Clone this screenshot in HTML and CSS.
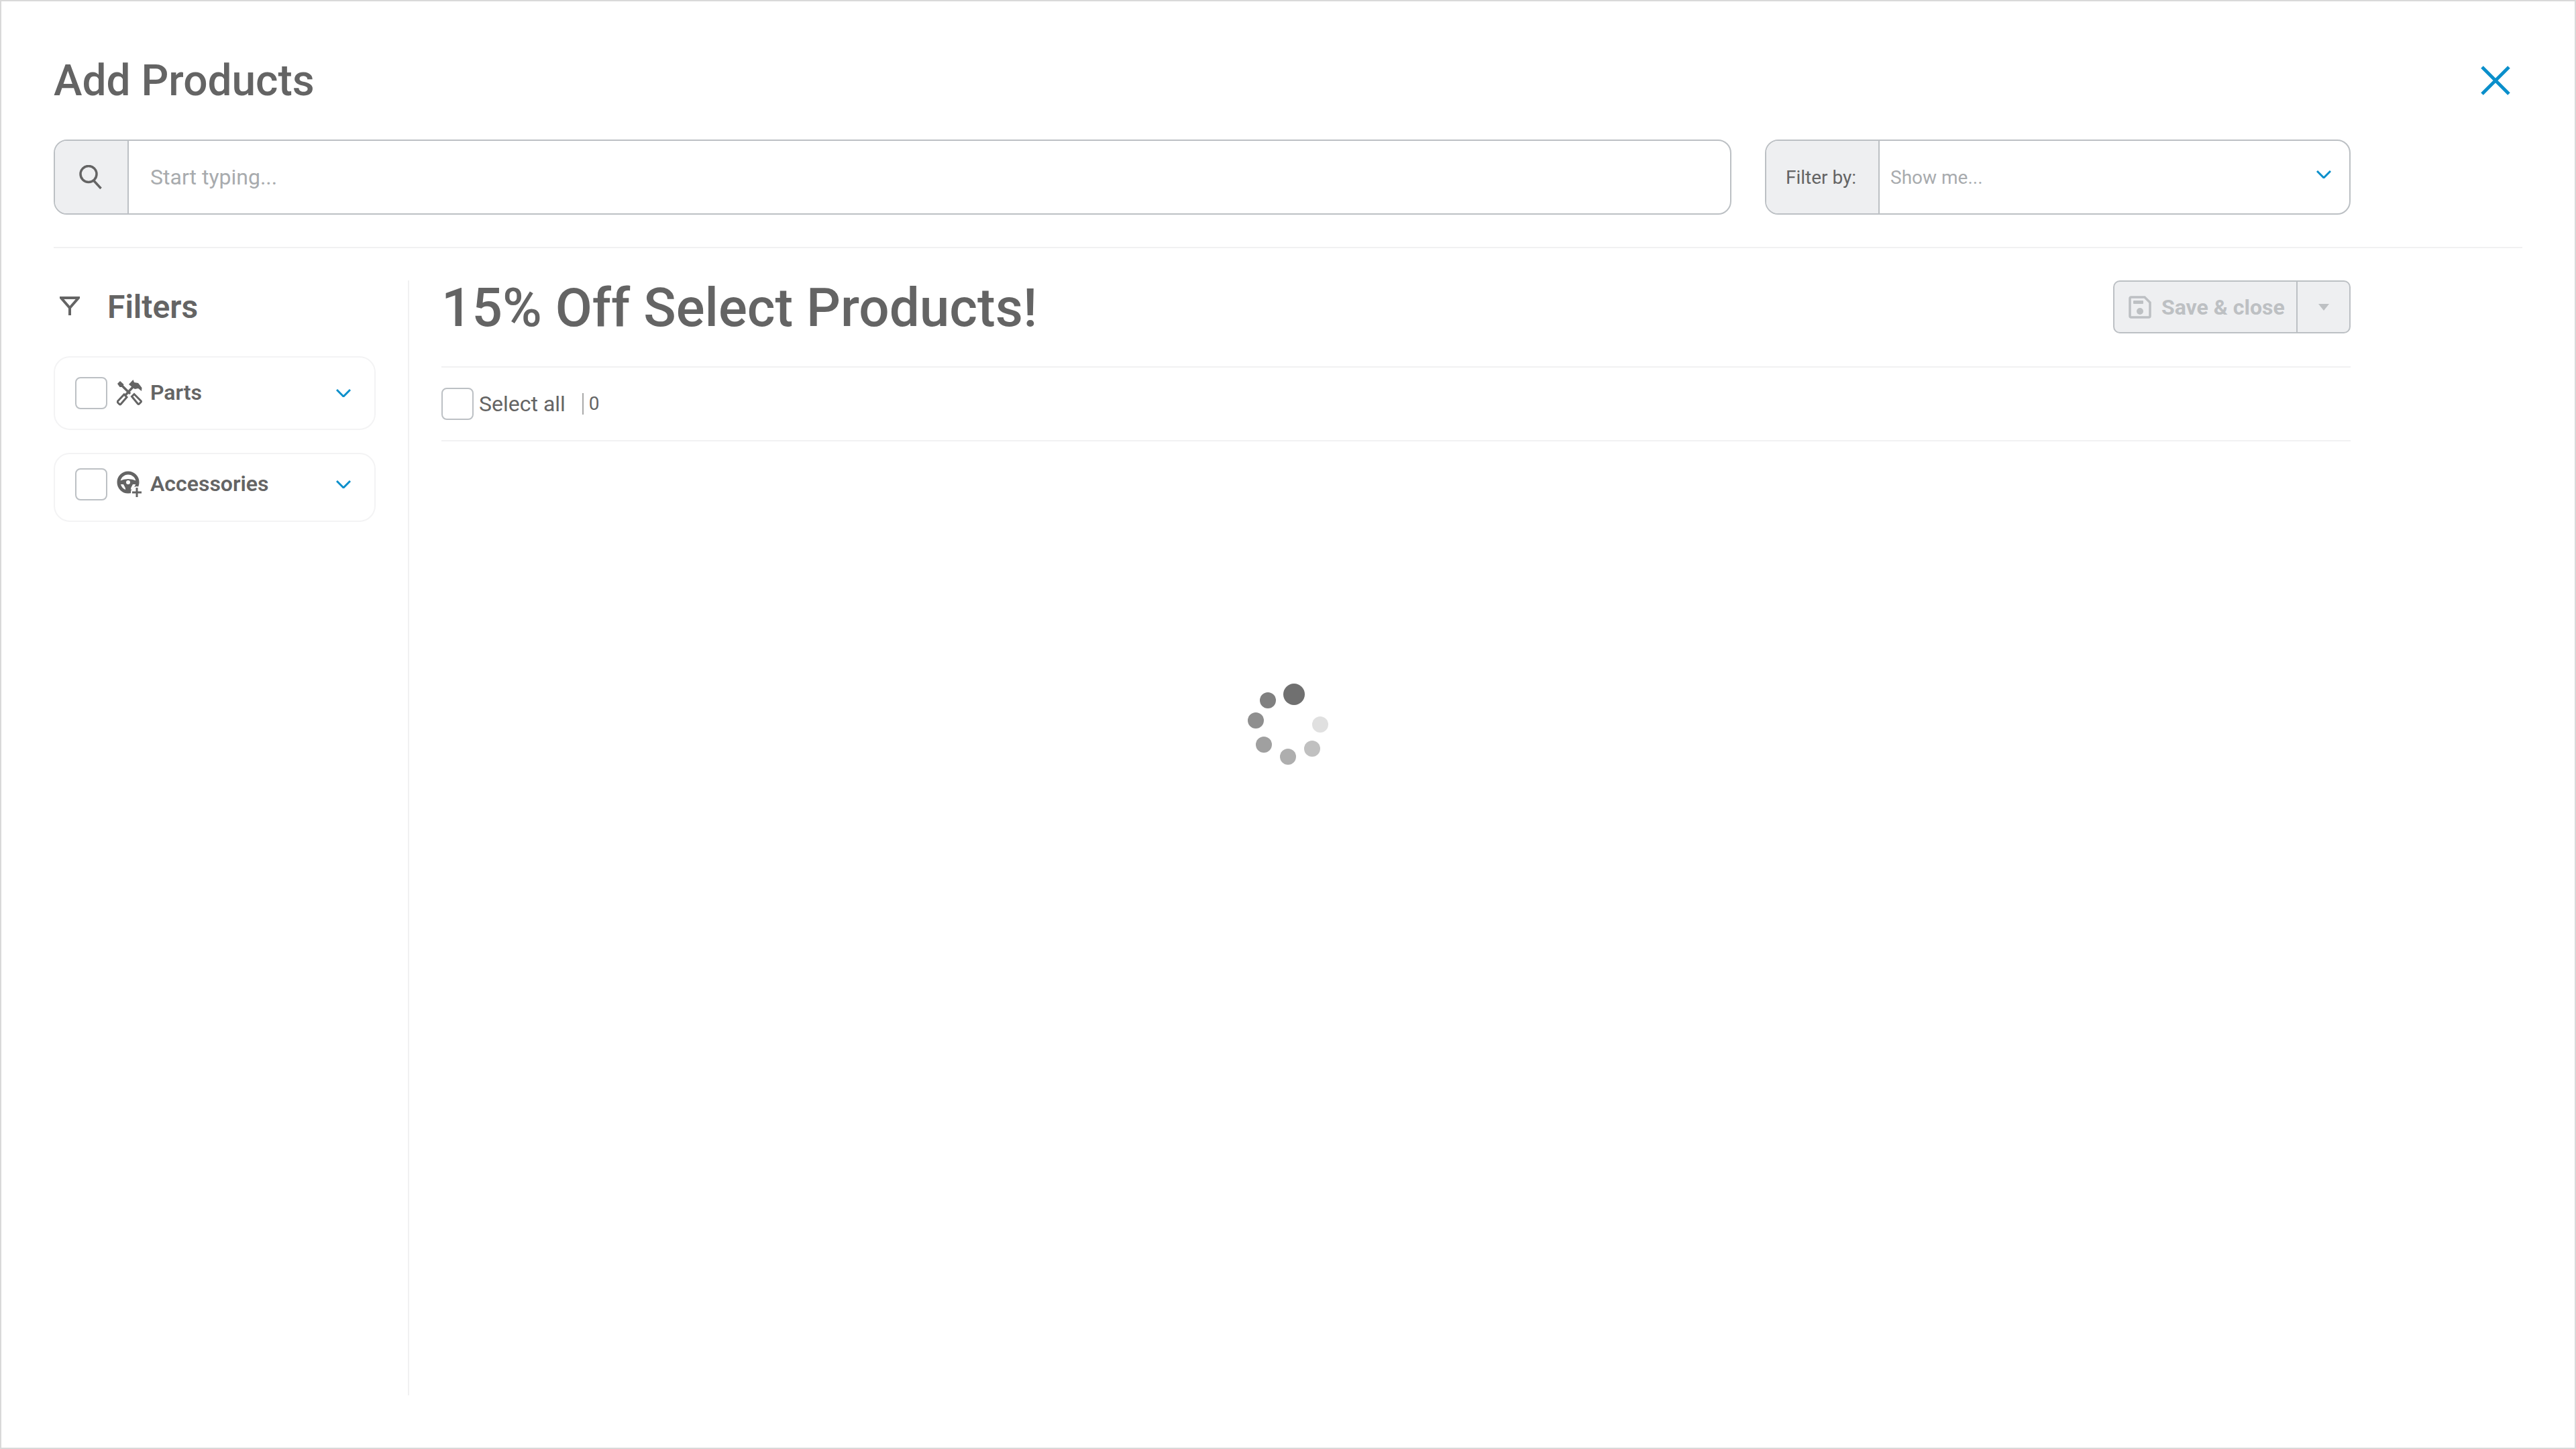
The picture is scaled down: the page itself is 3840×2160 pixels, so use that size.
FILE: index.html
```html
<!DOCTYPE html>
<html lang="en">
<head>
  <meta charset="UTF-8" />
  <title>Add Products</title>
  <link rel="stylesheet" href="styles.css">
</head>
<body>
  <div class="modal">
    <div class="title-row">
      <h1>Add Products</h1>
      <svg class="close" viewBox="0 0 44 44" aria-label="Close"><path d="M2 2 L42 42 M42 2 L2 42" /></svg>
    </div>

    <div class="search-row">
      <div class="field search">
        <div class="addon search-addon">
          <svg class="search-icon" viewBox="0 0 34 36"><circle cx="14" cy="13.5" r="12" /><path d="M21.5 23 L32.5 35" /></svg>
        </div>
        <div class="placeholder">Start typing...</div>
      </div>
      <div class="field filter-by">
        <div class="addon filter-addon">Filter by:</div>
        <div class="placeholder small">Show me...</div>
        <svg class="chevron" viewBox="0 0 22 12"><path d="M1 1 L11 11 L21 1" /></svg>
      </div>
    </div>

    <div class="content">
      <aside class="sidebar">
        <div class="filters-head">
          <svg class="funnel" viewBox="0 0 30 30"><path d="M2 2 H28 L15 17 Z M15 17 V28" /></svg>
          <span>Filters</span>
        </div>

        <div class="card parts">
          <span class="checkbox"></span>
          <svg class="cat-icon" viewBox="0 0 38 40">
            <path class="solid" d="M1 6 L5 2 L10.500 7 L8.500 11 L4.500 11 Z" />
            <path class="line" d="M7 8 L20 21" />
            <path class="outline" d="M22.500 25 L26 21.500 L36 31.500 Q37 32.500 36 33.500 L33.500 36 Q32.500 37 31.500 36 Z" />
            <path class="solid" d="M18 7 L24.500 0 L26 4 L32 5 L37.500 12 L37 17 L32 13 L27 14 L24 12 Z" />
            <path class="line" d="M24 11 L13 23" />
            <path class="outline" d="M11 22 L15 26 L6 36.500 Q5 37.500 4 36.500 L1.500 34 Q0.500 33 1.500 32 Z" />
          </svg>
          <span class="card-label">Parts</span>
          <svg class="chevron" viewBox="0 0 22 12"><path d="M1 1 L11 11 L21 1" /></svg>
        </div>

        <div class="card accessories">
          <span class="checkbox"></span>
          <svg class="cat-icon" viewBox="0 0 38 40">
            <circle class="ring" cx="17" cy="17" r="14" />
            <path class="solid" d="M4 15 Q17 9 30 15 L30 20 L24 20 Q21 24 20.500 30 L13.500 30 Q13 24 10 20 L4 20 Z" />
            <circle class="hub" cx="17" cy="17" r="3" />
            <circle class="halo" cx="30" cy="32" r="9" />
            <path class="plus" d="M30 25 V39 M23 32 H37" />
          </svg>
          <span class="card-label">Accessories</span>
          <svg class="chevron" viewBox="0 0 22 12"><path d="M1 1 L11 11 L21 1" /></svg>
        </div>
      </aside>

      <main class="main">
        <div class="main-head">
          <h2>15% Off Select Products!</h2>
          <div class="save-group">
            <div class="save-btn">
              <svg class="save-icon" viewBox="0 0 34 34">
                <path class="save-body" d="M2 4 Q2 2 4 2 H24 L32 10 V30 Q32 32 30 32 H4 Q2 32 2 30 Z" />
                <rect x="7" y="7" width="15" height="5" rx="1" />
                <circle cx="17" cy="23" r="5" />
              </svg>
              <span>Save &amp; close</span>
            </div>
            <div class="save-caret"><span class="caret"></span></div>
          </div>
        </div>
        <div class="select-row">
          <span class="checkbox"></span>
          <span class="select-label">Select all</span>
          <span class="count">0</span>
        </div>
      </main>
    </div>

    <svg class="spinner" viewBox="0 0 128 128">
      <circle cx="73" cy="20" r="16" fill="#707070" />
      <circle cx="34" cy="29" r="12" fill="#808080" />
      <circle cx="16" cy="59" r="12" fill="#8f8f8f" />
      <circle cx="28" cy="95" r="12" fill="#a0a0a0" />
      <circle cx="64" cy="113" r="12" fill="#aeaeae" />
      <circle cx="100" cy="101" r="12" fill="#c0c0c0" />
      <circle cx="112" cy="65" r="12" fill="#e0e0e0" />
    </svg>
  </div>
</body>
</html>
```

FILE: styles.css
```css
* {
  box-sizing: border-box;
}

body {
  margin: 0;
  font-family: 'Roboto', sans-serif;
  color: #646464;
  background: #fff;
}

.modal {
  position: relative;
  width: 3840px;
  height: 2160px;
  border: 2px solid #d9d9d9;
  padding: 78px 78px 0;
}

.title-row {
  display: flex;
  justify-content: space-between;
  align-items: center;
  height: 80px;
  margin-bottom: 48px;
}

h1 {
  margin: 0;
  font-size: 64px;
  font-weight: 500;
}

.close {
  width: 44px;
  height: 44px;
  margin-right: 18px;
}

.close path {
  fill: none;
  stroke: #0a8fcb;
  stroke-width: 5;
}

.search-row {
  display: flex;
  gap: 50px;
  padding: 0 256px 48px 0;
  border-bottom: 2px solid #f1f1f2;
}

.field {
  display: flex;
  align-items: center;
  height: 112px;
  border: 2px solid #bcc0c4;
  border-radius: 20px;
  overflow: hidden;
}

.search {
  flex: 1;
}

.filter-by {
  width: 873px;
  position: relative;
}

.addon {
  display: flex;
  align-items: center;
  justify-content: center;
  height: 100%;
  background: #eeeff1;
  border-right: 2px solid #bcc0c4;
}

.search-addon {
  width: 110px;
}

.filter-addon {
  justify-content: flex-start;
  width: 169px;
  padding-left: 29px;
  font-size: 28px;
}

.search-icon {
  width: 34px;
  height: 36px;
  margin-right: 3px;
}

.search-icon circle,
.search-icon path {
  fill: none;
  stroke: #646464;
  stroke-width: 3.5;
}

.placeholder {
  margin-left: 32px;
  font-size: 32px;
  color: #a8abae;
}

.placeholder.small {
  margin-left: 16px;
  font-size: 28px;
}

.filter-by .chevron {
  margin-left: auto;
  margin-right: 27px;
  margin-top: -8px;
}

.chevron {
  width: 22px;
  height: 12px;
  flex: none;
}

.chevron path {
  fill: none;
  stroke: #0a8fcb;
  stroke-width: 3;
}

.content {
  display: flex;
  height: 1710px;
  padding: 48px 0 0;
}

.sidebar {
  width: 530px;
  height: 1662px;
  padding-right: 48px;
  border-right: 2px solid #f1f1f2;
}

.filters-head {
  display: flex;
  align-items: center;
  gap: 41px;
  height: 78px;
  margin-bottom: 35px;
  padding-left: 9px;
  font-size: 48px;
  font-weight: 600;
}

.funnel {
  width: 30px;
  height: 30px;
  flex: none;
}

.funnel path {
  fill: none;
  stroke: #646464;
  stroke-width: 4;
  stroke-linejoin: miter;
}

.card {
  display: flex;
  align-items: center;
  padding: 0 35px 0 30px;
  border: 2px solid #f3f3f4;
  border-radius: 24px;
}

.card.parts {
  height: 110px;
  margin-bottom: 34px;
}

.card.accessories {
  height: 103px;
  padding-bottom: 10px;
}

.checkbox {
  width: 48px;
  height: 48px;
  flex: none;
  border: 2px solid #bcc0c4;
  border-radius: 8px;
  background: #fff;
}

.cat-icon {
  width: 38px;
  height: 40px;
  margin-left: 14px;
  flex: none;
}

.cat-icon .solid {
  fill: #646464;
}

.cat-icon .line {
  fill: none;
  stroke: #646464;
  stroke-width: 3.5;
}

.cat-icon .outline {
  fill: #fff;
  stroke: #646464;
  stroke-width: 3;
}

.cat-icon .ring {
  fill: none;
  stroke: #646464;
  stroke-width: 5;
}

.cat-icon .hub {
  fill: #fff;
}

.cat-icon .halo {
  fill: #fff;
}

.cat-icon .plus {
  fill: none;
  stroke: #646464;
  stroke-width: 3;
}

.card-label {
  margin-left: 12px;
  margin-bottom: 2px;
  font-size: 32px;
  font-weight: 600;
}

.card .chevron {
  margin-left: auto;
}

.main {
  width: 2846px;
  margin-left: 48px;
}

.main-head {
  display: flex;
  justify-content: space-between;
  align-items: center;
  padding-bottom: 49px;
  border-bottom: 2px solid #f1f1f2;
}

h2 {
  margin: 0;
  padding-top: 3px;
  font-size: 80px;
  line-height: 76px;
  font-weight: 500;
}

.save-group {
  display: flex;
  height: 79px;
  border: 2px solid #bcc0c4;
  border-radius: 10px;
  background: #eeeff1;
  color: #bdc0c3;
}

.save-btn {
  display: flex;
  align-items: center;
  gap: 15px;
  width: 273px;
  padding-left: 21px;
  border-right: 2px solid #bcc0c4;
  font-size: 32px;
  font-weight: 700;
}

.save-icon {
  width: 34px;
  height: 34px;
  flex: none;
}

.save-icon .save-body {
  fill: none;
  stroke: #bdc0c3;
  stroke-width: 3.5;
}

.save-icon rect,
.save-icon circle {
  fill: #bdc0c3;
}

.save-caret {
  display: flex;
  align-items: center;
  justify-content: center;
  width: 77px;
}

.caret {
  width: 0;
  height: 0;
  border-left: 8px solid transparent;
  border-right: 8px solid transparent;
  border-top: 10px solid #bdc0c3;
}

.select-row {
  display: flex;
  align-items: center;
  height: 110px;
  border-bottom: 2px solid #f1f1f2;
}

.select-label {
  margin-left: 8px;
  font-size: 32px;
}

.count {
  margin-left: 25px;
  padding-left: 8px;
  border-left: 2px solid #a9a9a9;
  font-size: 28px;
  line-height: 32px;
}

/* loading overlay, over the whole modal */
.spinner {
  position: absolute;
  left: 1854px;
  top: 1013px;
  width: 128px;
  height: 128px;
}
```
